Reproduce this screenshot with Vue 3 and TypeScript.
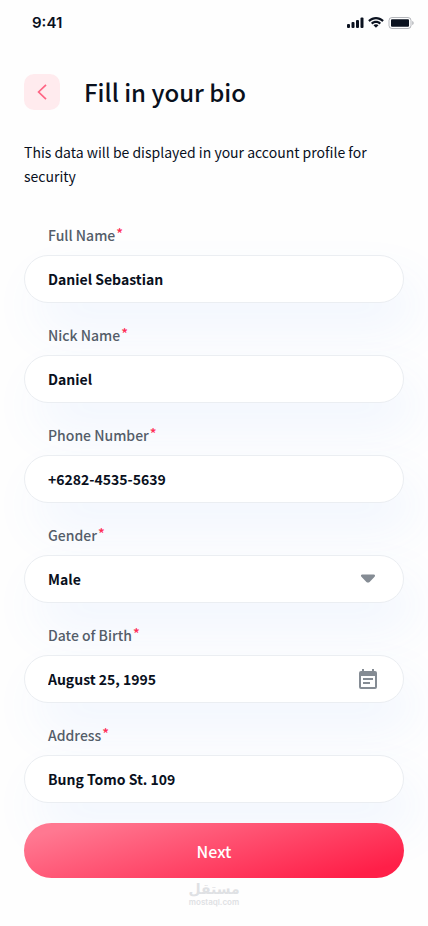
<script setup lang="ts">
import { reactive } from 'vue'

type Kind = 'text' | 'tel' | 'select' | 'date'

interface Field {
  id: string
  label: string
  kind: Kind
  value: string
}

const genders: string[] = ['Male', 'Female']

const fields = reactive<Field[]>([
  { id: 'full-name', label: 'Full Name', kind: 'text', value: 'Daniel Sebastian' },
  { id: 'nick-name', label: 'Nick Name', kind: 'text', value: 'Daniel' },
  { id: 'phone', label: 'Phone Number', kind: 'tel', value: '+6282-4535-5639' },
  { id: 'gender', label: 'Gender', kind: 'select', value: 'Male' },
  { id: 'birth', label: 'Date of Birth', kind: 'date', value: 'August 25, 1995' },
  { id: 'address', label: 'Address', kind: 'text', value: 'Bung Tomo St. 109' },
])
</script>

<template>
  <div class="screen">
    <div class="status">
      <span class="time">9:41</span>
      <div class="indicators">
        <svg width="18" height="12" viewBox="0 0 18 12" aria-hidden="true">
          <rect x="1" y="7" width="3" height="4" rx="1" />
          <rect x="5.500" y="5" width="3" height="6" rx="1" />
          <rect x="10" y="3" width="3" height="8" rx="1" />
          <rect x="14.500" y="0.500" width="3" height="10.500" rx="1" />
        </svg>
        <svg width="16" height="12" viewBox="0 0 16 12" aria-hidden="true">
          <path d="M8 2.3c2.3 0 4.5.9 6.1 2.4.1.1.3.1.4 0l1.1-1.2c.1-.1.1-.3 0-.4C11.300-.9 4.700-.9.4 3.100c-.1.1-.1.3 0 .4l1.100 1.200c.1.1.3.1.4 0C3.500 3.200 5.700 2.300 8 2.300z" />
          <path d="M8 6c1.200 0 2.400.5 3.300 1.300.1.1.3.1.4 0l1.200-1.200c.1-.1.1-.3 0-.4-2.800-2.600-7-2.600-9.800 0-.1.1-.1.3 0 .4l1.200 1.200c.1.1.3.1.4 0C5.600 6.500 6.800 6 8 6z" />
          <path d="M10.300 8.500c.1-.1.1-.3 0-.4-1.300-1.100-3.300-1.100-4.600 0-.1.1-.1.3 0 .4l2 2.100c.1.1.4.1.5 0z" />
        </svg>
        <svg width="26" height="12" viewBox="0 0 26 12" aria-hidden="true">
          <rect x="1" y="0.5" width="22" height="11" rx="3" fill="none" stroke="#0b1220" stroke-opacity="0.3" />
          <rect x="3" y="2.300" width="18" height="7.400" rx="1" />
          <path d="M24.300 4v4c.8-.3 1.300-1.100 1.300-2s-.5-1.700-1.300-2z" opacity="0.35" />
        </svg>
      </div>
    </div>

    <header class="header">
      <button class="back" type="button" aria-label="Back">
        <svg width="12" height="18" viewBox="0 0 12 18" aria-hidden="true">
          <path d="M10 1.800L2.600 9l7.400 7.200" fill="none" stroke="#ff6584" stroke-width="1.700" />
        </svg>
      </button>
      <h1 class="title">Fill in your bio</h1>
    </header>

    <p class="intro">This data will be displayed in your account profile for security</p>

    <form class="form" @submit.prevent>
      <div v-for="field in fields" :key="field.id" class="field">
        <label class="label" :for="field.id">{{ field.label }}<span class="star">*</span></label>
        <div class="box">
          <select v-if="field.kind === 'select'" :id="field.id" v-model="field.value" class="control">
            <option v-for="g in genders" :key="g" :value="g">{{ g }}</option>
          </select>
          <input v-else :id="field.id" v-model="field.value" class="control" :type="field.kind === 'tel' ? 'tel' : 'text'" />
          <svg v-if="field.kind === 'select'" class="icon" width="20" height="20" viewBox="0 0 20 20" aria-hidden="true">
            <path d="M4.200 5.500h11.600c1.200 0 1.700 1.500.8 2.300l-5 5.100c-.9.8-2.300.8-3.200 0l-5-5.100C2.500 7 3 5.500 4.200 5.500z" />
          </svg>
          <button v-if="field.kind === 'date'" class="icon-button" type="button" aria-label="Choose date">
            <svg class="icon" width="20" height="20" viewBox="0 0 20 20" aria-hidden="true">
              <path fill-rule="evenodd" d="M4 0h2v2h8V0h2v2h1a2 2 0 0 1 2 2v14a2 2 0 0 1-2 2H3a2 2 0 0 1-2-2V4a2 2 0 0 1 2-2h1zM3 7v11h14V7z" />
              <path d="M5 9h10v2H5zM5 13h7v2H5z" />
            </svg>
          </button>
        </div>
      </div>
      <button class="next" type="submit">Next</button>
    </form>

    <footer class="mark">
      <span class="mark-ar" lang="ar" dir="rtl">مستقل</span>
      <span class="mark-en">mostaql.com</span>
    </footer>
  </div>
</template>

<style>
body {
  background: #fefefe;
}
</style>

<style scoped>
.screen {
  box-sizing: border-box;
  padding: 12px 24px 16px;
  overflow: hidden;
  color: #09101d;
  font-family: "Noto Sans CJK SC", "Noto Sans", sans-serif;
  font-size: 14px;
  line-height: 24px;
}

.status {
  display: flex;
  align-items: center;
  justify-content: space-between;
  height: 22px;
  padding-left: 8px;
}

.time {
  font-family: Inter, sans-serif;
  font-size: 15px;
  font-weight: 600;
}

.indicators {
  display: flex;
  gap: 4px;
  margin-right: -10px;
}

.indicators svg {
  fill: #0b1220;
}

.header {
  display: flex;
  align-items: center;
  gap: 24px;
  margin-top: 40px;
}

.back {
  display: flex;
  align-items: center;
  justify-content: center;
  width: 36px;
  height: 36px;
  padding: 0;
  border: 0;
  border-radius: 10px;
  background: #ffebee;
}

.title {
  margin: 0;
  font-size: 24px;
  font-weight: 500;
  line-height: 36px;
}

.intro {
  margin: 30px 0 0;
}

.form {
  display: flex;
  flex-direction: column;
  gap: 20px;
  margin-top: 35px;
}

.field {
  display: flex;
  flex-direction: column;
  gap: 8px;
}

.label {
  position: relative;
  z-index: 1;
  align-self: flex-start;
  margin-left: 24px;
  color: #545d69;
  font-weight: 500;
}

.star {
  margin-left: 1px;
  color: #ff2e55;
  line-height: 1;
  vertical-align: 2px;
}

.box {
  display: flex;
  align-items: center;
  box-sizing: border-box;
  height: 48px;
  padding: 0 23px;
  border: 1px solid #ebeef2;
  border-radius: 24px;
  background: #fff;
  box-shadow: 12px 26px 50px rgba(80, 145, 250, 0.08);
}

.control {
  flex: 1;
  min-width: 0;
  height: 100%;
  padding: 0;
  border: 0;
  outline: 0;
  appearance: none;
  background: transparent;
  color: inherit;
  font: inherit;
  font-weight: 700;
}

.icon {
  display: block;
  margin-right: 2px;
  fill: #858c94;
}

.icon-button {
  padding: 0;
  border: 0;
  background: transparent;
}

.next {
  position: relative;
  height: 55px;
  padding: 0;
  border: 0;
  border-radius: 28px;
  background: linear-gradient(165deg, #ff7891 10%, #ff1f48 90%);
  color: #fff;
  font: inherit;
  font-size: 16px;
  font-weight: 500;
}

.mark {
  display: flex;
  flex-direction: column;
  align-items: center;
  margin-top: 3px;
  color: #dfe1e4;
}

.mark-ar {
  font-family: "DejaVu Sans", sans-serif;
  font-size: 14px;
  font-weight: 700;
  line-height: 16px;
}

.mark-en {
  font-family: Inter, sans-serif;
  font-size: 8px;
  font-weight: 600;
  line-height: 10px;
}
</style>
